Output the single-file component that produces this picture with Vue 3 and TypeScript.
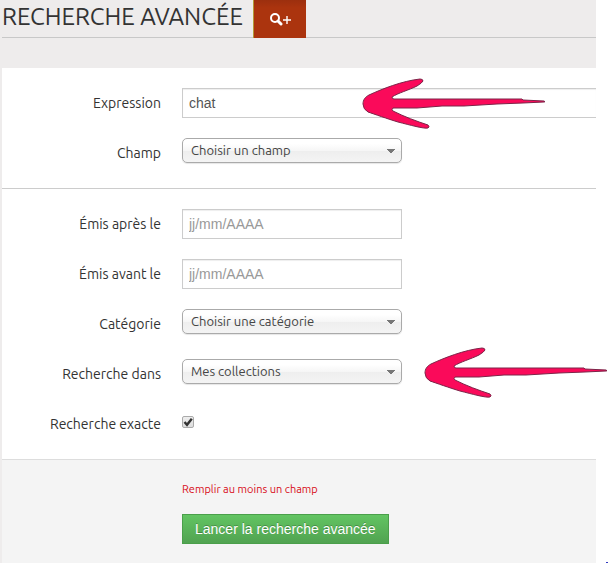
<script setup lang="ts">
import { ref } from 'vue'

const expression = ref('chat')
const field = ref('')
const after = ref('')
const before = ref('')
const category = ref('')
const scope = ref('mine')
const exact = ref(true)

const arrowPath =
  'M1 26 C1 22 3 19 7 17 C20 11 40 3 58 1 Q61 1 61 3 Q60 5 55 8 C47 12 36 15 30 19 Q30 21 32 21 L160 21 L161 22 L182 23 Q184 24 182 24 L161 25 L135 26 L102 28 L80 28 L55 30 L31 30 Q29 32 31 33 C43 39 54 43 66 47 Q68 49 66 50 C62 51 48 47 36 44 C26 41 12 36 6 34 Q1 31 1 26 Z'
</script>

<template>
  <div class="page">
    <header class="header">
      <div class="title-bar">
        <h1 class="title">RECHERCHE AVANCÉE</h1>
        <button class="more" type="button" aria-label="Recherche avancée">
          <svg class="more-icon" viewBox="0 0 22 14" aria-hidden="true">
            <circle cx="6" cy="6" r="4" fill="none" stroke="currentColor" stroke-width="2" />
            <path d="M9 9 L12 12" stroke="currentColor" stroke-width="3" stroke-linecap="round" />
            <path d="M14 8 H22 M18 4 V12" stroke="currentColor" stroke-width="1.4" />
          </svg>
        </button>
      </div>
    </header>

    <form class="form" @submit.prevent>
      <section class="group">
        <div class="row">
          <label class="label" for="expression">Expression</label>
          <div class="anchor">
            <input id="expression" v-model="expression" class="text wide" type="text" />
            <svg class="arrow arrow-input" viewBox="0 0 186 52" aria-hidden="true"><path :d="arrowPath" /></svg>
          </div>
        </div>
        <div class="row">
          <label class="label" for="field">Champ</label>
          <select id="field" v-model="field" class="select">
            <option value="">Choisir un champ</option>
          </select>
        </div>
      </section>

      <section class="group">
        <div class="row">
          <label class="label" for="after">Émis après le</label>
          <input id="after" v-model="after" class="text" type="text" placeholder="jj/mm/AAAA" />
        </div>
        <div class="row">
          <label class="label" for="before">Émis avant le</label>
          <input id="before" v-model="before" class="text" type="text" placeholder="jj/mm/AAAA" />
        </div>
        <div class="row">
          <label class="label" for="category">Catégorie</label>
          <select id="category" v-model="category" class="select">
            <option value="">Choisir une catégorie</option>
          </select>
        </div>
        <div class="row">
          <label class="label" for="scope">Recherche dans</label>
          <div class="anchor">
            <select id="scope" v-model="scope" class="select">
              <option value="mine">Mes collections</option>
            </select>
            <svg class="arrow arrow-select" viewBox="0 0 186 52" aria-hidden="true"><path :d="arrowPath" /></svg>
          </div>
        </div>
        <div class="row">
          <label class="label" for="exact">Recherche exacte</label>
          <span class="tick">
            <input id="exact" v-model="exact" class="check" type="checkbox" />
            <svg v-if="exact" class="tick-mark" viewBox="0 0 12 12" aria-hidden="true">
              <path d="M2.5 6 L5 8.8 L9.8 2.8" />
            </svg>
          </span>
        </div>
      </section>

      <footer class="footer">
        <p class="error">Remplir au moins un champ</p>
        <button class="submit" type="submit">Lancer la recherche avancée</button>
      </footer>
    </form>
    <span class="speck"></span>
  </div>
</template>

<style>
body {
  background: #fff;
}
</style>

<style scoped>
.page {
  position: relative;
  box-sizing: border-box;
  display: flex;
  flex-direction: column;
  min-height: 100vh;
  padding-right: 12px;
  overflow: hidden;
  font-family: Ubuntu, 'Noto Sans', sans-serif;
  font-size: 14px;
  color: #333;
}

.header {
  padding: 0 0 30px 2px;
  background: #eeecec;
}

.title-bar {
  display: flex;
  gap: 10px;
  height: 37px;
  border-bottom: 1px solid #c8c8c8;
}

.title {
  margin: 0;
  font-size: 24px;
  font-weight: 400;
  line-height: 34px;
  white-space: nowrap;
}

.more {
  display: flex;
  align-items: center;
  justify-content: center;
  box-sizing: border-box;
  width: 53px;
  height: 38px;
  padding: 0;
  border: 0;
  border-left: 1px solid #b39a35;
  background: linear-gradient(#9c2f0e, #ab340e 8px);
  color: #fff;
}

.more-icon {
  width: 22px;
  height: 14px;
}

.form {
  display: flex;
  flex: 1;
  flex-direction: column;
  border-left: 2px solid #eeecec;
}

.group {
  display: flex;
  flex-direction: column;
  gap: 20px;
  padding: 20px 0;
  border-bottom: 1px solid #ccc;
}

.group:nth-of-type(2) {
  border-bottom-color: #ddd;
}

.row {
  display: grid;
  grid-template-columns: 159px minmax(0, 1fr);
  column-gap: 21px;
  height: 30px;
}

.label {
  line-height: 30px;
  text-align: right;
  white-space: nowrap;
}

.anchor {
  position: relative;
}

.text {
  box-sizing: border-box;
  width: 220px;
  height: 30px;
  padding: 4px 6px;
  border: 1px solid #ccc;
  border-radius: 0;
  background: #fff;
  box-shadow: inset 0 1px 1px rgba(0, 0, 0, 0.07);
  font: 14px 'Liberation Sans', Arial, sans-serif;
  color: #555;
  outline: none;
}

.text.wide {
  display: block;
  width: 100%;
  border-right: 0;
}

.text::placeholder {
  color: #999;
  opacity: 1;
}

.select {
  display: block;
  box-sizing: border-box;
  width: 220px;
  height: 25px;
  padding: 0 24px 2px 8px;
  appearance: none;
  border: 1px solid #aaa;
  border-radius: 5px;
  background:
    conic-gradient(from -42deg at 50% 100%, #777 0 84deg, transparent 0) right 5px top 10px / 10px 5px no-repeat,
    linear-gradient(#fff 20%, #f6f6f6 50%, #eee 52%, #f4f4f4 100%);
  box-shadow: 0 1px 1px rgba(0, 0, 0, 0.1);
  font: 13px Ubuntu, 'Noto Sans', sans-serif;
  color: #444;
}

.tick {
  display: grid;
  align-self: start;
  width: 12px;
  height: 12px;
  margin-top: 7px;
}

.check,
.tick-mark {
  grid-area: 1 / 1;
  width: 12px;
  height: 12px;
}

.check {
  box-sizing: border-box;
  margin: 0;
  appearance: none;
  border: 1px solid #aaa;
  border-radius: 2px;
  background: linear-gradient(#eee, #ddd);
}

.tick-mark {
  fill: none;
  stroke: #333;
  stroke-width: 2.4;
  pointer-events: none;
}

.footer {
  display: flex;
  flex: 1;
  flex-direction: column;
  align-items: flex-start;
  gap: 16px;
  padding: 20px 0 18px 180px;
  background: #f4f4f4;
}

.error {
  margin: 0;
  font-size: 11px;
  line-height: 18px;
  color: #d80c18;
}

.submit {
  height: 30px;
  padding: 0 12px;
  border: 1px solid #4a9f4a;
  background: linear-gradient(#62c462, #51a351);
  font: 14px 'Liberation Sans', Arial, sans-serif;
  color: #fff;
  text-shadow: 0 -1px 0 rgba(0, 0, 0, 0.25);
  white-space: nowrap;
}

.arrow {
  position: absolute;
  width: 186px;
  height: 52px;
  fill: #fa0a5a;
  stroke: #7c2448;
  stroke-width: 1;
  pointer-events: none;
}

.arrow-input {
  top: -10px;
  left: 180px;
}

.arrow-select {
  top: -12px;
  left: 242px;
}

.speck {
  position: absolute;
  right: 0;
  bottom: 0;
  width: 2px;
  height: 1px;
  background: #3038c0;
}
</style>
